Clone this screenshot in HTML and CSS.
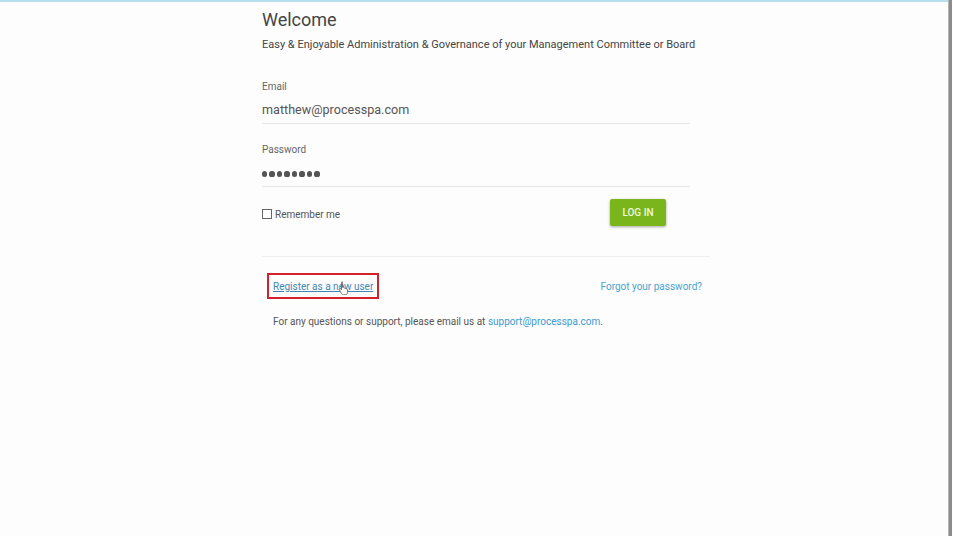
FILE: index.html
```html
<!DOCTYPE html>
<html>
<head>
<meta charset="utf-8">
<link rel="stylesheet" href="styles.css">
</head>
<body>
<div class="topline"></div>
<div class="frame">
  <main class="panel">
    <h1 class="title">Welcome</h1>
    <p class="subtitle">Easy &amp; Enjoyable Administration &amp; Governance of your Management Committee or Board</p>
    <div class="field email">
      <label class="label">Email</label>
      <div class="value">matthew@processpa.com</div>
    </div>
    <div class="field password">
      <label class="label">Password</label>
      <div class="value dots"><span></span><span></span><span></span><span></span><span></span><span></span><span></span><span></span></div>
    </div>
    <div class="actions">
      <label class="remember"><span class="box"></span>Remember me</label>
      <button class="login">LOG IN</button>
    </div>
    <div class="sep"></div>
    <div class="links">
      <span class="reg-wrap"><a class="link reg">Register as a new user</a>
        <svg class="cursor" width="11" height="14" viewBox="0 0 11 14"><path d="M3.5 1.2c.6 0 1 .4 1 1v4.3l.3-.1c.5-.2 1 .1 1.1.4l.1.3c.5-.3 1.1-.1 1.3.4.5-.2 1.1.1 1.2.6.6-.1 1.1.3 1.1.9v2.3c0 1.4-1 2.5-2.4 2.5H5.4c-.8 0-1.4-.4-1.8-1L1.3 8.9c-.3-.5-.1-1 .3-1.2.4-.2.9-.1 1.2.3l.7.9V2.2c0-.6.4-1 1-1z" fill="#fff" stroke="#666" stroke-width=".9"/></svg>
      </span>
      <a class="link forgot">Forgot your password?</a>
    </div>
    <p class="support">For any questions or support, please email us at <a class="mail">support@processpa.com</a>.</p>
  </main>
  <div class="edge"></div>
</div>
</body>
</html>
```
FILE: styles.css
```css
html, body {
  margin: 0;
  padding: 0;
  background: #fdfdfd;
  height: 100%;
}
body {
  font-family: Roboto, "Liberation Sans", Arial, sans-serif;
  color: #444;
  overflow: hidden;
}
.topline {
  height: 2px;
  background: #b9dfec;
  margin-right: 4px;
}
.frame {
  display: flex;
  height: 534px;
}
.panel {
  flex: 1;
  padding-left: 262px;
  padding-top: 7px;
}
.edge {
  width: 3px;
  background: #8c8c8c;
  border-left: 1px solid #b5b5b5;
  margin-top: -2px;
  margin-right: 1px;
}
.title {
  margin: 0;
  font-weight: 400;
  font-size: 18px;
  line-height: 22px;
  color: #444;
}
.subtitle {
  margin: 7px 0 0;
  font-size: 11px;
  line-height: 14px;
  color: #444;
}
.field {
  width: 428px;
  border-bottom: 1px solid #e6e6e6;
}
.label {
  display: block;
  font-size: 10px;
  line-height: 12px;
  color: #666;
}
.email .label {
  padding-top: 29px;
}
.password .label {
  padding-top: 20px;
}
.value {
  font-size: 12.6px;
  line-height: 16px;
  color: #555;
  padding: 9px 0 5px;
}
.dots {
  display: flex;
  gap: 2.3px;
  align-items: center;
  height: 16px;
  padding: 10px 0 4px;
}
.dots span {
  width: 5.2px;
  height: 5.2px;
  border-radius: 50%;
  background: #555;
}
.actions {
  width: 404px;
  display: flex;
  justify-content: space-between;
  align-items: center;
  margin-top: 12px;
}
.remember {
  display: flex;
  align-items: center;
  font-size: 10px;
  color: #555;
  margin-top: 3px;
}
.box {
  width: 8px;
  height: 8px;
  border: 1px solid #666;
  margin-right: 3px;
  background: #fff;
}
.login {
  width: 56px;
  height: 27px;
  border: none;
  border-radius: 2px;
  background: #7bb51c;
  color: #eef7dd;
  font-family: inherit;
  font-size: 10px;
  font-weight: 500;
  box-shadow: 0 1px 3px rgba(0, 0, 0, 0.35);
  padding: 0;
}
.sep {
  width: 448px;
  border-top: 1px solid #f0f0f0;
  margin-top: 30px;
}
.links {
  width: 440px;
  padding-left: 11px;
  margin-top: 18px;
  display: flex;
  justify-content: space-between;
  align-items: center;
  box-sizing: border-box;
}
.reg-wrap {
  position: relative;
  display: inline-block;
  outline: 2px solid #d3212d;
  padding: 0 4px;
  margin-left: -4px;
  line-height: 20px;
}
.link {
  font-size: 10px;
  color: #4aa2cf;
}
.reg {
  color: #3f86b3;
  text-decoration: underline;
}
.cursor {
  position: absolute;
  left: 69px;
  top: 6px;
}
.support {
  margin: 19px 0 0 11px;
  font-size: 10px;
  line-height: 12px;
  color: #555;
}
.mail {
  color: #3a9ad3;
}
```
